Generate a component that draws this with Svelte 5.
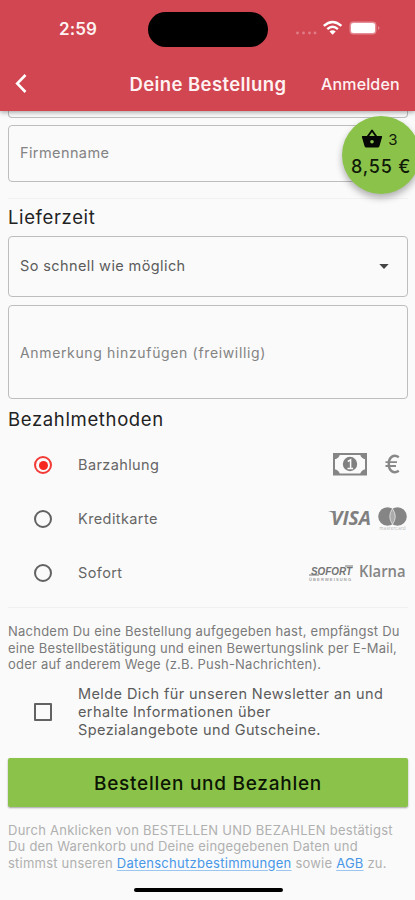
<script>
  let method = $state('bar');
  let newsletter = $state(false);
  const methods = [
    { id: 'bar', label: 'Barzahlung' },
    { id: 'karte', label: 'Kreditkarte' },
    { id: 'sofort', label: 'Sofort' }
  ];
</script>

<div class="screen">
  <header>
    <div class="status">
      <span class="time">2:59</span>
      <span class="island"></span>
      <svg class="signals" width="90" height="20" viewBox="0 0 90 20">
        <g fill="#e07d86">
          <circle cx="7.500" cy="14" r="1.400" /><circle cx="13.500" cy="14" r="1.400" />
          <circle cx="19.500" cy="14" r="1.400" /><circle cx="25" cy="14" r="1.400" />
        </g>
        <g fill="none" stroke="#fff" stroke-width="2.4">
          <path d="M33.800 6.8Q42.600 -1 51.400 6.8" />
          <path d="M37.300 10.1Q42.600 5.4 47.900 10.1" />
        </g>
        <path d="M39.500 12.5Q42.600 9.8 45.700 12.500L42.600 15.800Z" fill="#fff" />
        <rect x="59.500" y="2.500" width="27" height="13" rx="4" fill="#e58c94" />
        <rect x="61" y="4" width="24" height="10" rx="2.500" fill="#fff" />
        <path d="M88 7q3 2 0 4z" fill="#e58c94" />
      </svg>
    </div>
    <nav>
      <svg class="back" width="14" height="22" viewBox="0 0 14 22"><path d="M11.500 2L3.200 10.500l8.300 8.500" fill="none" stroke="#fff" stroke-width="2.600" /></svg>
      <span class="title">Deine Bestellung</span>
      <span class="login">Anmelden</span>
    </nav>
  </header>

  <main>
    <div class="field cut"></div>
    <div class="field company"><span class="ph firm">Firmenname</span></div>
    <hr class="first" />
    <h2 class="delivery">Lieferzeit</h2>
    <div class="field select">
      <span class="soon">So schnell wie möglich</span>
      <svg width="10" height="5" viewBox="0 0 10 5"><path d="M0.300 0h9.400L5 4.900z" fill="#444" /></svg>
    </div>
    <div class="field note"><span class="ph remark">Anmerkung hinzufügen (freiwillig)</span></div>
    <h2 class="pay">Bezahlmethoden</h2>

    <div class="methods">
      {#each methods as m}
        <div class="method" role="radio" tabindex="-1" aria-checked={method === m.id} onclick={() => (method = m.id)} onkeydown={() => {}}>
          <span class="radio" class:on={method === m.id}></span>
          <span class="label">{m.label}</span>
          {#if m.id === 'bar'}
            <svg width="107" height="40" viewBox="0 0 107 40">
              <rect x="33" y="9" width="32" height="20.500" fill="none" stroke="#858585" stroke-width="2" />
              <path d="M33 8.500h6q-.5 5-6 6zM65 8.500h-6q.5 5 6 6zM33 30h6q-.5-5-6-6zM65 30h-6q.5-5 6-6z" fill="#858585" />
              <circle cx="49" cy="19" r="7.200" fill="#808080" />
              <path d="M46.800 16.500l2.800-1.700v8.700M46.500 23.500h5.600" fill="none" stroke="#fafafa" stroke-width="1.500" />
              <g fill="none" stroke="#888" stroke-width="2.500"><path d="M97.800 12.200C93 9 87.800 11.500 87.800 19S93 29 97.800 25.800" /><path d="M84.500 17.100h11.500M84.500 21h10.500" stroke-width="1.800" /></g>
            </svg>
          {:else if m.id === 'karte'}
            <svg width="107" height="40" viewBox="0 0 107 40">
              <text x="30" y="25.500" class="visa" textLength="40" lengthAdjust="spacingAndGlyphs">VISA</text>
              <path d="M27 12h6l2 5q-3-4-8-5z" fill="#858585" />
              <circle cx="86.500" cy="17.500" r="9.300" fill="#858585" />
              <circle cx="96.500" cy="17.500" r="9.300" fill="#858585" />
              <path d="M91.500 9.700Q86 17.500 91.500 25.300Q97 17.500 91.500 9.700Z" fill="#aaa" stroke="#e8e8e8" stroke-width=".8" />
              <text x="78.500" y="31" class="mc" textLength="26">mastercard</text>
            </svg>
          {:else}
            <svg width="107" height="40" viewBox="0 0 107 40">
              <text x="10" y="22" class="sofort-logo" textLength="41" lengthAdjust="spacingAndGlyphs">SOFORT</text>
              <path d="M8 22h10M44 13h8" stroke="#777" stroke-width="1" />
              <text x="8" y="28" class="transfer" textLength="42">ÜBERWEISUNG</text>
              <text x="58" y="24" class="klarna" textLength="46.500" lengthAdjust="spacingAndGlyphs">Klarna</text>
            </svg>
          {/if}
        </div>
      {/each}
    </div>

    <hr class="second" />
    <p class="info">
      <span class="i1">Nachdem Du eine Bestellung aufgegeben hast, empfängst Du</span>
      <span class="i2">eine Bestellbestätigung und einen Bewertungslink per E-Mail,</span>
      <span class="i3">oder auf anderem Wege (z.B. Push-Nachrichten).</span>
    </p>
    <div class="newsletter">
      <button class="box" class:checked={newsletter} aria-label="Newsletter" onclick={() => (newsletter = !newsletter)}></button>
      <p>
        <span>Melde Dich für unseren Newsletter an und</span>
        <span>erhalte Informationen über</span>
        <span>Spezialangebote und Gutscheine.</span>
      </p>
    </div>
    <button class="order"><span>Bestellen und Bezahlen</span></button>
    <p class="legal">
      <span>Durch Anklicken von BESTELLEN UND BEZAHLEN bestätigst</span>
      <span class="l2">Du den Warenkorb und Deine eingegebenen Daten und</span>
      <span class="l3">stimmst unseren <u>Datenschutzbestimmungen</u> sowie <u>AGB</u> zu.</span>
    </p>
    <div class="home"></div>
  </main>

  <div class="cart">
    <div class="count">
      <svg width="22" height="20" viewBox="0 0 22 20"><path d="M6 8.500L11 1.500L16 8.500" fill="none" stroke="#050805" stroke-width="1.900" stroke-linejoin="round" /><path d="M1.500 7h19q.8 0 .6.900L18.500 17q-.4 1.500-1.800 1.500H5.300q-1.400 0-1.800-1.500L.9 7.900q-.2-.9.600-.9z" fill="#050805" /><circle cx="11" cy="12.700" r="1.800" fill="#8bc34a" /></svg>
      <span>3</span>
    </div>
    <span class="sum">8,55 €</span>
  </div>
</div>

<style>
  :global(body) { margin: 0; background: #fafafa; }
  .screen { position: relative; width: 415px; height: 900px; overflow: hidden; background: #fafafa; font-family: Inter, 'Liberation Sans', sans-serif; font-size: 14.500px; color: #5c5c5c; display: flex; flex-direction: column; }
  .screen * { box-sizing: border-box; }
  span { white-space: nowrap; }
  header { position: relative; z-index: 2; flex: none; height: 111px; background: #d14651; color: #fff2f2; box-shadow: 0 1px 5px rgba(0, 0, 0, .4); }
  .status { display: flex; height: 58px; align-items: center; padding-left: 59px; }
  .time { width: 89px; font-size: 17px; font-weight: 600; letter-spacing: .1px; }
  .island { width: 120px; height: 35px; border-radius: 18px; background: #000; }
  .signals { margin-left: 22px; }
  nav { display: flex; height: 52px; align-items: center; }
  .back { margin-left: 14px; }
  .title { margin-left: 101.500px; width: 191.500px; font-size: 18.500px; font-weight: 600; letter-spacing: .4px; }
  .login { font-size: 16px; font-weight: 500; letter-spacing: .15px; }
  main { display: flex; flex-direction: column; flex: 1; padding: 0 7px 0 8px; }
  .field { flex: none; display: flex; align-items: center; border: 1px solid #bdbdbd; border-radius: 4px; padding: 0 11px; }
  .field span { padding-bottom: 2px; }
  .cut { height: 7px; border-top: 0; border-radius: 0 0 4px 4px; }
  .company { height: 57px; margin-top: 7px; }
  .ph { color: #838383; }
  hr { width: 100%; height: 1px; border: 0; margin: 0; background: #f1f1f1; flex: none; }
  .first { margin-top: 16px; }
  h2 { margin: 0; font-size: 18.500px; font-weight: 400; color: #222; line-height: 24px; white-space: nowrap; flex: none; }
  .delivery { margin-top: 6px; margin-bottom: 7px; letter-spacing: .63px; }
  .select { height: 61px; justify-content: space-between; padding-right: 18px; }
  .note { height: 94px; margin-top: 8px; }
  .pay { margin-top: 8px; letter-spacing: .65px; }
  .firm { letter-spacing: .4px; }
  .soon { letter-spacing: .4px; }
  .note .remark { letter-spacing: .65px; font-size: 14px; padding-bottom: 0; }
  .methods { margin-top: 7px; flex: none; }
  .method { height: 54px; display: flex; align-items: center; padding-left: 26px; }
  .method svg { margin-left: auto; }
  .radio { width: 18px; height: 18px; border: 2px solid #626262; border-radius: 50%; display: flex; align-items: center; justify-content: center; }
  .radio.on { border-color: #f33b35; }
  .radio.on::after { content: ''; width: 9px; height: 9px; border-radius: 50%; background: #f5291f; }
  .label { margin-left: 26px; letter-spacing: .4px; color: #666; padding-bottom: 1px; }
  .visa { font: italic 700 19px 'Open Sans', sans-serif; fill: #808080; }
  .mc { font: 4.500px Inter, sans-serif; fill: #b8b8b8; }
  .sofort-logo { font: italic 700 11.500px/1 'Liberation Sans', sans-serif; fill: #747474; }
  .transfer { font: 700 4px/1 'Liberation Sans', sans-serif; fill: #a2a2a2; }
  .klarna { font: 600 16px 'Open Sans', sans-serif; fill: #858585; }
  .second { margin-top: 7px; background: #f0f0f0; }
  p { margin: 0; }
  p span { display: block; width: max-content; }
  .info { margin-top: 15px; font-size: 13px; line-height: 16.500px; color: #7a7a7a; letter-spacing: .24px; flex: none; }
  .i2, .i3 { letter-spacing: .21px; }
  .newsletter { display: flex; align-items: center; margin-top: 12px; padding-left: 26px; flex: none; height: 55px; }
  .box { flex: none; width: 18px; height: 18px; padding: 0; border: 2px solid #626262; background: transparent; border-radius: 1px; }
  .box.checked { background: #f33b35; }
  .newsletter p { margin-left: 26px; font-size: 14.500px; line-height: 18.300px; letter-spacing: .41px; color: #5c5c5c; }
  .order { width: 100%; height: 49px; margin-top: 18px; flex: none; padding: 2px 0 0; background: #8bc34a; border: 0; border-radius: 2px; font-family: inherit; font-size: 19px; font-weight: 500; color: #0c1504; letter-spacing: .74px; box-shadow: 0 1px 2px rgba(0, 0, 0, .35); }
  .legal { margin-top: 15px; font-size: 13px; line-height: 16.500px; color: #b0b0b0; letter-spacing: .25px; flex: none; }
  .l2, .l3 { letter-spacing: .22px; }
  u { color: #4797e8; text-underline-offset: 2px; text-decoration-color: #9cc5ef; }
  .l3 u:first-child { letter-spacing: .28px; }
  .home { align-self: center; width: 149px; height: 4px; border-radius: 2px; margin-top: 17px; background: #000; flex: none; }
  .cart { position: absolute; z-index: 3; left: 342px; top: 116px; width: 78px; height: 78px; border-radius: 50%; background: #8bc34a; color: #101a08; box-shadow: 0 4px 7px rgba(0, 0, 0, .3); display: flex; flex-direction: column; align-items: center; }
  .count { display: flex; align-items: center; gap: 5px; height: 24px; margin: 11px 3px 0 0; font-size: 15px; }
  .sum { font-size: 18px; font-weight: 500; line-height: 24px; margin-top: 4px; letter-spacing: .8px; }
</style>
